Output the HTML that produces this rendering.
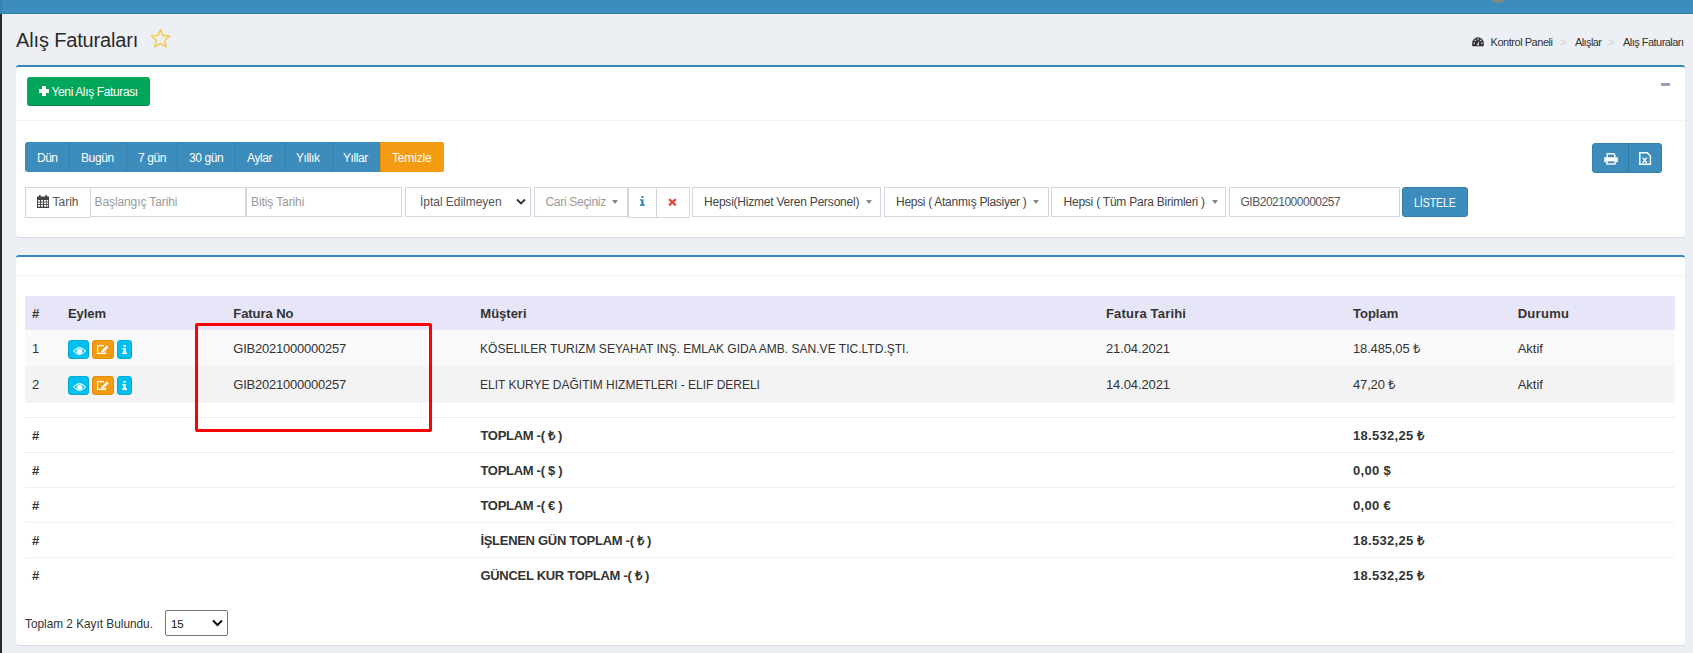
<!DOCTYPE html>
<html><head><meta charset="utf-8">
<style>
*{box-sizing:border-box;margin:0;padding:0}
html,body{width:1693px;height:653px;overflow:hidden}
body{background:#ecf0f5;font-family:"Liberation Sans",sans-serif;color:#333;position:relative}
.a{position:absolute}
.t{position:absolute;white-space:nowrap;line-height:1}
#topbar{left:0;top:0;width:1693px;height:14px;background:#3c8dbc;border-bottom:1px solid #367fa9}
#side{left:0;top:14px;width:2px;height:639px;background:#222d32}
.box{position:absolute;background:#fff;border-top:2px solid #3287bb;border-radius:3px;box-shadow:0 1px 1px rgba(0,0,0,.1)}
.hr{position:absolute;height:1px;background:#f4f4f4}
.btn{position:absolute;border-radius:3px;color:#fff;font-size:12px}
.inp{position:absolute;border:1px solid #d2d6de;background:#fff}
.ph{color:#999}
.grp div{position:absolute;top:0;height:30px;border-right:1px solid #367fa9}
</style></head><body>
<div id="topbar" class="a"></div>
<div class="a" style="left:1490px;top:-10px;width:16px;height:13px;border-radius:50%;background:#7d8b80"></div>
<div id="side" class="a"></div>
<div class="a" style="left:0;top:0;width:2px;height:13px;background:#3783b0"></div>

<!-- title -->
<div class="t" style="left:16px;top:30px;font-size:20px;letter-spacing:-0.15px;color:#2a2a2a">Alış Faturaları</div>
<svg class="a" style="left:150px;top:28px" width="21" height="21" viewBox="0 0 21 21"><path d="M10.5 1.5 L13.1 7.6 L19.6 8.1 L14.6 12.3 L16.2 18.8 L10.5 15.3 L4.8 18.8 L6.4 12.3 L1.4 8.1 L7.9 7.6 Z" fill="none" stroke="#f8c84c" stroke-width="1.5" stroke-linejoin="round"/></svg>

<!-- breadcrumb -->
<svg class="a" style="left:1472px;top:36.5px" width="12" height="10" viewBox="0 0 12 10"><path d="M0.2 9.3 V6 A5.8 5.8 0 0 1 11.8 6 V9.3 Z" fill="#333"/><g fill="#fff"><circle cx="2.2" cy="6.3" r="0.75"/><circle cx="3.2" cy="3.3" r="0.75"/><circle cx="6" cy="2" r="0.75"/><circle cx="8.8" cy="3.3" r="0.75"/><circle cx="9.8" cy="6.3" r="0.75"/><path d="M5.5 7.5 L6.6 3 L6.6 7.5 Z"/><circle cx="6" cy="7.6" r="0.9"/></g></svg>

<div class="t" style="left:1490.5px;top:37px;font-size:11px;letter-spacing:-0.46px;color:#333">Kontrol Paneli</div>
<div class="t" style="left:1560px;top:37px;font-size:11px;color:#ccc">&gt;</div>
<div class="t" style="left:1575px;top:37px;font-size:11px;letter-spacing:-0.59px;color:#333">Alışlar</div>
<div class="t" style="left:1608px;top:37px;font-size:11px;color:#ccc">&gt;</div>
<div class="t" style="left:1623px;top:37px;font-size:11px;letter-spacing:-0.53px;color:#333">Alış Faturaları</div>

<!-- box 1 -->
<div class="box" style="left:16px;top:65px;width:1669px;height:172px"></div>
<div class="hr" style="left:16px;top:120px;width:1669px"></div>
<div class="a" style="left:1661px;top:83px;width:9px;height:3px;background:#97a0b3"></div>
<div class="btn" style="left:27px;top:77px;width:123px;height:29px;background:#00a65a;border-bottom:1px solid #008d4c"></div>
<div class="a" style="left:42px;top:85.5px;width:3.5px;height:10px;background:#fff"></div>
<div class="a" style="left:38.5px;top:89px;width:10.5px;height:3.5px;background:#fff"></div>
<div class="t" style="left:51.5px;top:85.5px;font-size:12px;letter-spacing:-0.37px;color:#fff">Yeni Alış Faturası</div>


<!-- button group -->
<div class="a" style="left:25px;top:142px;width:419px;height:30px;border-radius:3px;overflow:hidden;background:#3c8dbc">
 <div class="a" style="left:44px;top:0;width:1px;height:30px;background:#367fa9"></div>
 <div class="a" style="left:101px;top:0;width:1px;height:30px;background:#367fa9"></div>
 <div class="a" style="left:152px;top:0;width:1px;height:30px;background:#367fa9"></div>
 <div class="a" style="left:210px;top:0;width:1px;height:30px;background:#367fa9"></div>
 <div class="a" style="left:260px;top:0;width:1px;height:30px;background:#367fa9"></div>
 <div class="a" style="left:307px;top:0;width:1px;height:30px;background:#367fa9"></div>
 <div class="a" style="left:355px;top:0;width:64px;height:30px;background:#f39c12;border-left:1px solid #e08e0b"></div>
</div>
<div class="t" style="left:37px;top:152px;font-size:12px;letter-spacing:-0.5px;color:#fff">Dün</div>
<div class="t" style="left:81px;top:152px;font-size:12px;letter-spacing:-0.4px;color:#fff">Bugün</div>
<div class="t" style="left:138px;top:152px;font-size:12px;letter-spacing:-0.4px;color:#fff">7 gün</div>
<div class="t" style="left:189px;top:152px;font-size:12px;letter-spacing:-0.4px;color:#fff">30 gün</div>
<div class="t" style="left:247px;top:152px;font-size:12px;letter-spacing:-0.4px;color:#fff">Aylar</div>
<div class="t" style="left:296px;top:152px;font-size:12px;letter-spacing:-0.4px;color:#fff">Yıllık</div>
<div class="t" style="left:343px;top:152px;font-size:12px;letter-spacing:-0.4px;color:#fff">Yıllar</div>
<div class="t" style="left:392px;top:152px;font-size:12px;letter-spacing:-0.15px;color:#fff">Temizle</div>

<!-- print / excel -->
<div class="a" style="left:1592px;top:143px;width:70px;height:30px;border-radius:3px;background:#3c8dbc;border:1px solid #367fa9"></div>
<div class="a" style="left:1628px;top:143px;width:1px;height:30px;background:#2f77a1"></div>
<svg class="a" style="left:1603.5px;top:152.5px" width="14" height="12" viewBox="0 0 14 12">
 <path d="M3.2 4.5 V0.8 H9.5 L10.8 2.1 V4.5" fill="none" stroke="#fff" stroke-width="1.5"/>
 <path d="M0.2 4.3 H13.8 V9.2 H11.8 V7.6 H2.2 V9.2 H0.2 Z" fill="#fff"/>
 <rect x="3" y="7.6" width="8" height="3.4" fill="none" stroke="#fff" stroke-width="1.4"/>
</svg>
<svg class="a" style="left:1639px;top:152px" width="13" height="13" viewBox="0 0 13 13">
 <path d="M0.8 0.8 H8.2 L11.4 4 V12.2 H0.8 Z" fill="none" stroke="#fff" stroke-width="1.5"/>
 <path d="M3.6 5.6 L7.8 11 M7.8 5.6 L3.6 11" stroke="#fff" stroke-width="1.4"/>
</svg>

<!-- filter row -->
<div class="inp" style="left:25px;top:187px;width:66px;height:31px;border-color:#d2d6de"></div>
<svg class="a" style="left:37px;top:195px" width="12" height="13" viewBox="0 0 12 13">
 <rect x="0" y="1.5" width="12" height="11.5" fill="#444"/>
 <rect x="2" y="0" width="1.6" height="3" fill="#444"/><rect x="8.4" y="0" width="1.6" height="3" fill="#444"/>
 <g fill="#fff"><rect x="1" y="5" width="2" height="1.6"/><rect x="4" y="5" width="2" height="1.6"/><rect x="7" y="5" width="2" height="1.6"/><rect x="9.6" y="5" width="1.5" height="1.6"/>
 <rect x="1" y="7.5" width="2" height="1.6"/><rect x="4" y="7.5" width="2" height="1.6"/><rect x="7" y="7.5" width="2" height="1.6"/><rect x="9.6" y="7.5" width="1.5" height="1.6"/>
 <rect x="1" y="10" width="2" height="1.6"/><rect x="4" y="10" width="2" height="1.6"/><rect x="7" y="10" width="2" height="1.6"/><rect x="9.6" y="10" width="1.5" height="1.6"/></g>
</svg>
<div class="t" style="left:52.5px;top:196px;font-size:12px;color:#555">Tarih</div>
<div class="inp" style="left:90px;top:187px;width:156px;height:30px"></div>
<div class="t ph" style="left:94.5px;top:196px;font-size:12px;letter-spacing:-0.1px">Başlangıç Tarihi</div>
<div class="inp" style="left:246px;top:187px;width:156px;height:30px"></div>
<div class="t ph" style="left:251px;top:196px;font-size:12px;letter-spacing:-0.1px">Bitiş Tarihi</div>

<div class="inp" style="left:405px;top:187px;width:126px;height:30px"></div>
<div class="t" style="left:420px;top:196px;font-size:12px;letter-spacing:-0.03px;color:#555">İptal Edilmeyen</div>
<svg class="a" style="left:516px;top:198px" width="10" height="8" viewBox="0 0 10 8"><path d="M1 1.5 L5 5.5 L9 1.5" fill="none" stroke="#333" stroke-width="1.8"/></svg>

<div class="inp" style="left:534px;top:187px;width:94px;height:30px"></div>
<div class="t" style="left:545.5px;top:196px;font-size:12px;letter-spacing:-0.3px;color:#999">Cari Seçiniz</div>
<div class="a" style="left:612px;top:200px;width:0;height:0;border-left:3.5px solid transparent;border-right:3.5px solid transparent;border-top:4px solid #888"></div>

<div class="inp" style="left:628px;top:187px;width:29px;height:31px"></div>
<div class="inp" style="left:656px;top:187px;width:34px;height:31px"></div>
<svg class="a" style="left:640px;top:196px" width="5" height="10" viewBox="0 0 5 10"><rect x="1.2" y="0" width="2.5" height="1.8" fill="#3c8dbc"/><path d="M0 3.3 H3.6 V8.4 H4.8 V10 H0 V8.4 H1.1 V4.7 H0 Z" fill="#3c8dbc"/></svg>
<svg class="a" style="left:668px;top:197.5px" width="9" height="8.5" viewBox="0 0 9 8.5"><path d="M1.2 1.2 L7.8 7.3 M7.8 1.2 L1.2 7.3" stroke="#dd4b39" stroke-width="2.4"/></svg>

<div class="inp" style="left:692px;top:187px;width:189px;height:30px"></div>
<div class="t" style="left:704px;top:196px;font-size:12px;letter-spacing:-0.22px;color:#444">Hepsi(Hizmet Veren Personel)</div>
<div class="a" style="left:866px;top:200px;width:0;height:0;border-left:3.5px solid transparent;border-right:3.5px solid transparent;border-top:4px solid #888"></div>

<div class="inp" style="left:884px;top:187px;width:165px;height:30px"></div>
<div class="t" style="left:896px;top:196px;font-size:12px;letter-spacing:-0.29px;color:#444">Hepsi ( Atanmış Plasiyer )</div>
<div class="a" style="left:1033px;top:200px;width:0;height:0;border-left:3.5px solid transparent;border-right:3.5px solid transparent;border-top:4px solid #888"></div>

<div class="inp" style="left:1051px;top:187px;width:175px;height:30px"></div>
<div class="t" style="left:1063.5px;top:196px;font-size:12px;letter-spacing:-0.23px;color:#444">Hepsi ( Tüm Para Birimleri )</div>
<div class="a" style="left:1212px;top:200px;width:0;height:0;border-left:3.5px solid transparent;border-right:3.5px solid transparent;border-top:4px solid #888"></div>

<div class="inp" style="left:1229px;top:187px;width:171px;height:30px"></div>
<div class="t" style="left:1240.5px;top:196px;font-size:12px;letter-spacing:-0.49px;color:#555">GIB2021000000257</div>

<div class="btn" style="left:1402px;top:187px;width:66px;height:30px;background:#3c8dbc;border:1px solid #367fa9"></div>
<div class="t" style="left:1414px;top:197px;font-size:12px;color:#fff;transform:scaleX(0.87);transform-origin:0 0">LİSTELE</div>


<!-- box 2 -->
<div class="box" style="left:16px;top:255px;width:1669px;height:390px"></div>
<div class="hr" style="left:16px;top:275px;width:1669px"></div>
<div class="a" style="left:25px;top:296px;width:1650px;height:34px;background:#e6e6f8"></div>
<div class="a" style="left:25px;top:330px;width:1650px;height:36px;background:#f9f9f9"></div>
<div class="a" style="left:25px;top:366px;width:1650px;height:37px;background:#f3f3f3"></div>
<div class="t" style="left:32px;top:307px;font-size:13px;font-weight:bold;color:#333">#</div>
<div class="t" style="left:68px;top:307px;font-size:13px;font-weight:bold;letter-spacing:-0.08px;color:#333">Eylem</div>
<div class="t" style="left:233.3px;top:307px;font-size:13px;font-weight:bold;letter-spacing:-0.06px;color:#333">Fatura No</div>
<div class="t" style="left:480.3px;top:307px;font-size:13px;font-weight:bold;color:#333">Müşteri</div>
<div class="t" style="left:1106px;top:307px;font-size:13px;font-weight:bold;letter-spacing:0.18px;color:#333">Fatura Tarihi</div>
<div class="t" style="left:1353px;top:307px;font-size:13px;font-weight:bold;color:#333">Toplam</div>
<div class="t" style="left:1517.7px;top:307px;font-size:13px;font-weight:bold;letter-spacing:0.29px;color:#333">Durumu</div>

<div class="t" style="left:32px;top:342.2px;font-size:13px;color:#333">1</div>
<div class="btn" style="left:68px;top:340px;width:21px;height:19px;background:#00c0ef;border:1px solid #00acd6"></div>

<div class="btn" style="left:92px;top:340px;width:22px;height:19px;background:#f39c12;border:1px solid #e08e0b"></div>

<div class="btn" style="left:117px;top:340px;width:15px;height:19px;background:#00c0ef;border:1px solid #00acd6"></div>
<svg class="a" style="left:72.5px;top:346.5px" width="13" height="8" viewBox="0 0 13 8"><path d="M0.6 4 Q6.5 -2.8 12.4 4 Q6.5 10.8 0.6 4 Z" fill="none" stroke="#fff" stroke-width="1.1"/><ellipse cx="6.5" cy="4.3" rx="2.8" ry="2.4" fill="#fff"/></svg>
<svg class="a" style="left:97px;top:345px" width="12" height="10" viewBox="0 0 12 10"><path d="M7 0.6 H0.6 V8.4 H8.4 V6.5" fill="none" stroke="#fff" stroke-width="1.2"/><path d="M4 7.6 L4.3 6 L9.8 0.5 L11.6 2.3 L6 7.8 Z" fill="#fff"/></svg>
<svg class="a" style="left:121.8px;top:345px" width="5.5" height="9" viewBox="0 0 5.5 9"><rect x="1.2" y="0" width="2.6" height="1.6" fill="#fff"/><path d="M0.2 3 H3.8 V7.5 H5 V9 H0.2 V7.5 H1.3 V4.3 H0.2 Z" fill="#fff"/></svg>


<div class="t" style="left:233.3px;top:342.2px;font-size:13px;letter-spacing:-0.23px;color:#333">GIB2021000000257</div>
<div class="t" style="left:480.3px;top:342.2px;font-size:13px;transform:scaleX(0.926);transform-origin:0 0;color:#333">KÖSELILER TURIZM SEYAHAT INŞ. EMLAK GIDA AMB. SAN.VE TIC.LTD.ŞTI.</div>
<div class="t" style="left:1106px;top:342.2px;font-size:13px;letter-spacing:-0.12px;color:#333">21.04.2021</div>
<div class="t" style="left:1353px;top:342.2px;font-size:13px;letter-spacing:-0.15px;color:#333">18.485,05 ₺</div>
<div class="t" style="left:1517.7px;top:342.2px;font-size:13px;color:#333">Aktif</div>

<div class="t" style="left:32px;top:377.6px;font-size:13px;color:#333">2</div>
<div class="btn" style="left:68px;top:376px;width:21px;height:19px;background:#00c0ef;border:1px solid #00acd6"></div>

<div class="btn" style="left:92px;top:376px;width:22px;height:19px;background:#f39c12;border:1px solid #e08e0b"></div>

<div class="btn" style="left:117px;top:376px;width:15px;height:19px;background:#00c0ef;border:1px solid #00acd6"></div>
<svg class="a" style="left:72.5px;top:382.5px" width="13" height="8" viewBox="0 0 13 8"><path d="M0.6 4 Q6.5 -2.8 12.4 4 Q6.5 10.8 0.6 4 Z" fill="none" stroke="#fff" stroke-width="1.1"/><ellipse cx="6.5" cy="4.3" rx="2.8" ry="2.4" fill="#fff"/></svg>
<svg class="a" style="left:97px;top:381px" width="12" height="10" viewBox="0 0 12 10"><path d="M7 0.6 H0.6 V8.4 H8.4 V6.5" fill="none" stroke="#fff" stroke-width="1.2"/><path d="M4 7.6 L4.3 6 L9.8 0.5 L11.6 2.3 L6 7.8 Z" fill="#fff"/></svg>
<svg class="a" style="left:121.8px;top:381px" width="5.5" height="9" viewBox="0 0 5.5 9"><rect x="1.2" y="0" width="2.6" height="1.6" fill="#fff"/><path d="M0.2 3 H3.8 V7.5 H5 V9 H0.2 V7.5 H1.3 V4.3 H0.2 Z" fill="#fff"/></svg>


<div class="t" style="left:233.3px;top:377.6px;font-size:13px;letter-spacing:-0.23px;color:#333">GIB2021000000257</div>
<div class="t" style="left:480.3px;top:377.6px;font-size:13px;transform:scaleX(0.922);transform-origin:0 0;color:#333">ELIT KURYE DAĞITIM HIZMETLERI - ELIF DERELI</div>
<div class="t" style="left:1106px;top:377.6px;font-size:13px;letter-spacing:-0.12px;color:#333">14.04.2021</div>
<div class="t" style="left:1353px;top:377.6px;font-size:13px;letter-spacing:-0.15px;color:#333">47,20 ₺</div>
<div class="t" style="left:1517.7px;top:377.6px;font-size:13px;color:#333">Aktif</div>

<div class="hr" style="left:25px;top:417px;width:1650px;background:#f0f0f0"></div>
<div class="t" style="left:32px;top:428.5px;font-size:13px;font-weight:bold;color:#333">#</div>
<div class="t" style="left:480.4px;top:428.5px;font-size:13px;font-weight:bold;letter-spacing:-0.29px;color:#333">TOPLAM -( ₺ )</div>
<div class="t" style="left:1353px;top:428.5px;font-size:13px;font-weight:bold;letter-spacing:0.3px;color:#333">18.532,25 ₺</div>
<div class="hr" style="left:25px;top:452px;width:1650px;background:#f0f0f0"></div>
<div class="t" style="left:32px;top:463.5px;font-size:13px;font-weight:bold;color:#333">#</div>
<div class="t" style="left:480.4px;top:463.5px;font-size:13px;font-weight:bold;letter-spacing:-0.29px;color:#333">TOPLAM -( $ )</div>
<div class="t" style="left:1353px;top:463.5px;font-size:13px;font-weight:bold;letter-spacing:0.3px;color:#333">0,00 $</div>
<div class="hr" style="left:25px;top:487px;width:1650px;background:#f0f0f0"></div>
<div class="t" style="left:32px;top:498.5px;font-size:13px;font-weight:bold;color:#333">#</div>
<div class="t" style="left:480.4px;top:498.5px;font-size:13px;font-weight:bold;letter-spacing:-0.29px;color:#333">TOPLAM -( € )</div>
<div class="t" style="left:1353px;top:498.5px;font-size:13px;font-weight:bold;letter-spacing:0.3px;color:#333">0,00 €</div>
<div class="hr" style="left:25px;top:522px;width:1650px;background:#f0f0f0"></div>
<div class="t" style="left:32px;top:533.5px;font-size:13px;font-weight:bold;color:#333">#</div>
<div class="t" style="left:480.4px;top:533.5px;font-size:13px;font-weight:bold;letter-spacing:-0.29px;color:#333">İŞLENEN GÜN TOPLAM -( ₺ )</div>
<div class="t" style="left:1353px;top:533.5px;font-size:13px;font-weight:bold;letter-spacing:0.3px;color:#333">18.532,25 ₺</div>
<div class="hr" style="left:25px;top:557px;width:1650px;background:#f0f0f0"></div>
<div class="t" style="left:32px;top:568.5px;font-size:13px;font-weight:bold;color:#333">#</div>
<div class="t" style="left:480.4px;top:568.5px;font-size:13px;font-weight:bold;letter-spacing:-0.29px;color:#333">GÜNCEL KUR TOPLAM -( ₺ )</div>
<div class="t" style="left:1353px;top:568.5px;font-size:13px;font-weight:bold;letter-spacing:0.3px;color:#333">18.532,25 ₺</div>


<div class="t" style="left:25px;top:617px;font-size:13px;transform:scaleX(0.908);transform-origin:0 0;color:#333">Toplam 2 Kayıt Bulundu.</div>
<div class="a" style="left:165px;top:610px;width:63px;height:26px;border:1px solid #767676;border-radius:2px;background:#fff"></div>
<div class="t" style="left:171px;top:618.8px;font-size:11.5px;letter-spacing:-0.2px;color:#111">15</div>
<svg class="a" style="left:212px;top:619px" width="11" height="8" viewBox="0 0 11 8"><path d="M1 1.5 L5.5 6 L10 1.5" fill="none" stroke="#111" stroke-width="2"/></svg>

<!-- red annotation -->
<div class="a" style="left:194.5px;top:323.3px;width:237.5px;height:108.7px;border:3px solid #ff0000;border-radius:2px"></div>

</body></html>
